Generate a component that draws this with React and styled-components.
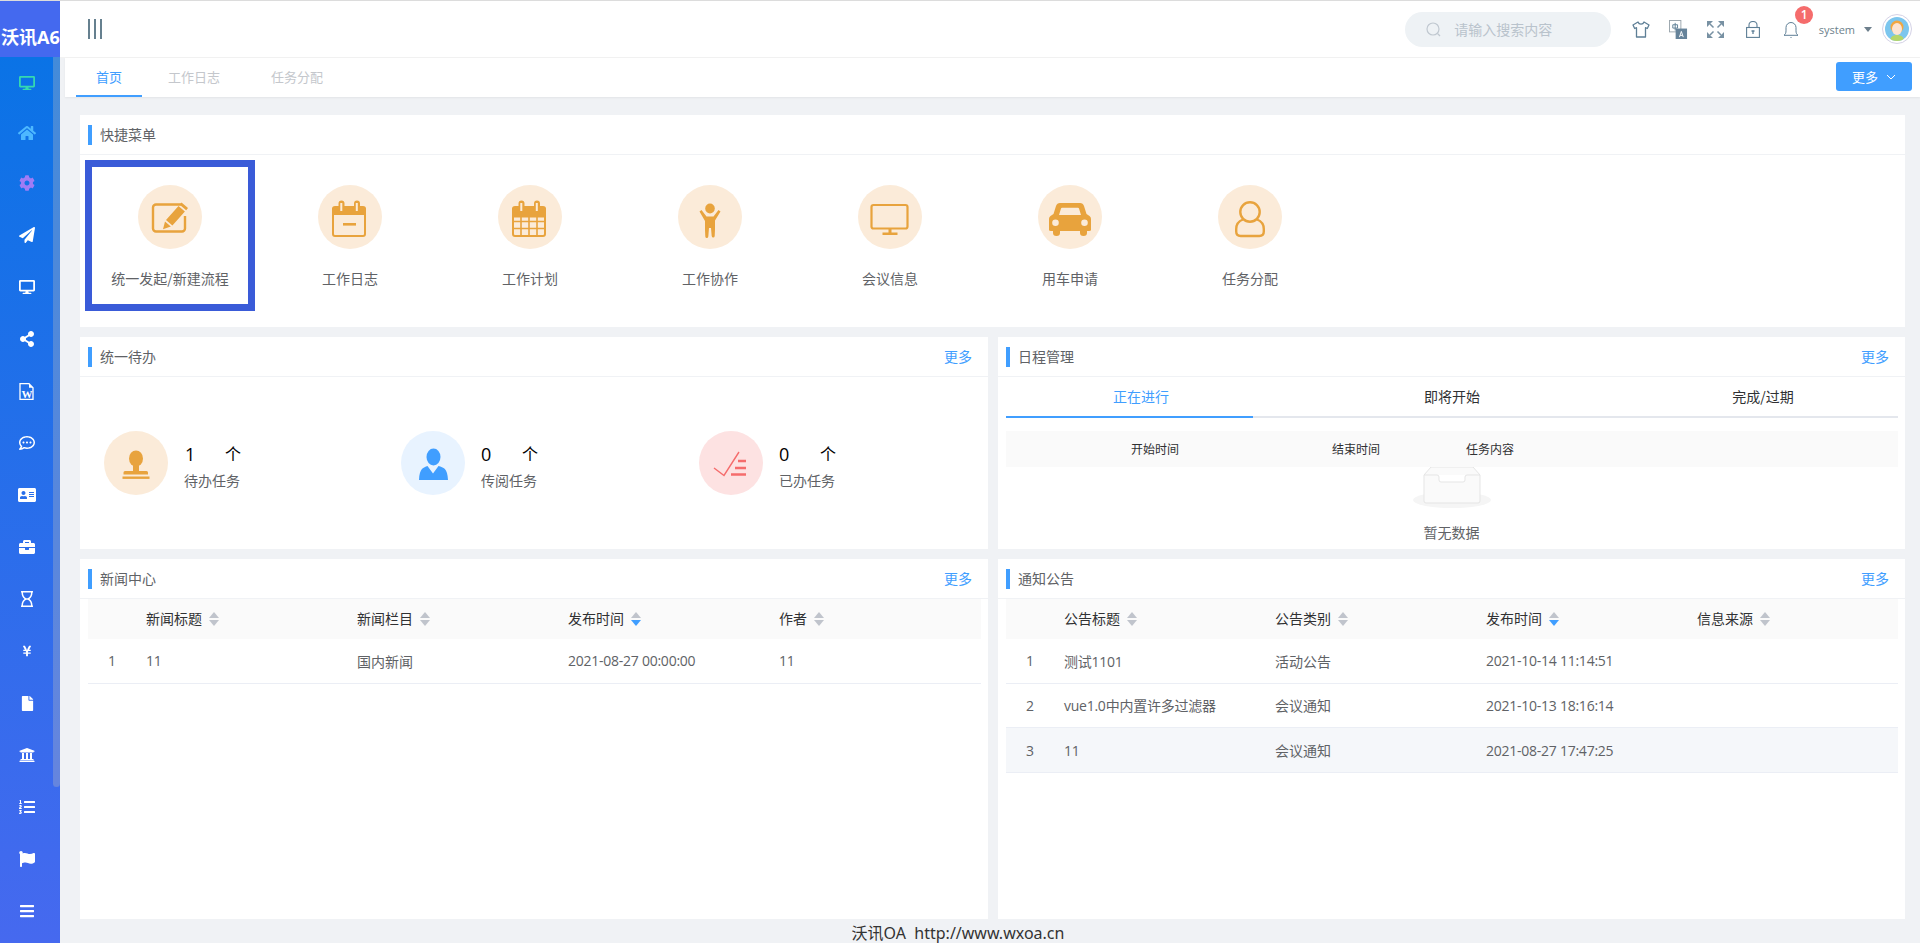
import React from 'react'
import styled, { createGlobalStyle } from 'styled-components'
import {
  FaDesktop, FaHome, FaCog, FaPaperPlane, FaShareAlt, FaRegCommentDots,
  FaAddressCard, FaBriefcase, FaRegHourglass, FaYenSign, FaFile, FaUniversity, FaListOl, FaFlag, FaBars,
} from 'react-icons/fa'

const GlobalStyle = createGlobalStyle`
  html, body { margin: 0; padding: 0; height: 100%; overflow: hidden; background: #f0f2f5; }
  * { box-sizing: border-box; }
  body { font-family: "Open Sans", "Noto Sans CJK SC", sans-serif; font-size: 14px; color: #606266; }
`

const Page = styled.div`
  display: grid;
  grid-template-columns: 60px 1fr;
  width: 1920px;
  height: 943px;
  border-top: 1px solid #dcdcdc;
`

/* sidebar */
const Sidebar = styled.aside`
  display: flex;
  flex-direction: column;
  height: 942px;
  overflow: hidden;
`
const Logo = styled.div`
  flex: 0 0 56px;
  padding: 22px 0 0 1px;
  background: #4469ef;
  color: #fff;
  font-size: 18px;
  font-weight: 700;
  line-height: 28px;
  white-space: nowrap;
  overflow: hidden;
`
const Nav = styled.nav`
  position: relative;
  flex: 1;
  background: linear-gradient(180deg, #0a73e6 0%, #4669ef 100%);
`
const Thumb = styled.div`
  position: absolute;
  top: 0;
  right: 0;
  width: 7px;
  height: 730px;
  border-radius: 0 0 4px 4px;
  background: rgba(190, 190, 190, 0.32);
`
const NavItem = styled.div`
  display: flex;
  align-items: center;
  justify-content: center;
  width: 54px;
  height: 52px;
  margin-top: ${(p) => (p.$tight ? -2 : 0)}px;
  color: ${(p) => p.$color || '#fff'};
  font-size: ${(p) => p.$size || 16}px;
`

/* top bar */
const Main = styled.div`
  display: flex;
  flex-direction: column;
  min-width: 0;
  height: 942px;
`
const TopBar = styled.header`
  display: flex;
  align-items: center;
  flex: 0 0 57px;
  padding: 0 8px 0 28px;
  background: #fff;
  border-bottom: 1px solid #f2f2f2;
`
const Hamburger = styled.div`
  display: flex;
  gap: 4px;
  height: 20px;
  i {
    display: block;
    width: 2px;
    background: #66808f;
  }
`
const Search = styled.div`
  display: flex;
  align-items: center;
  width: 206px;
  height: 35px;
  margin-left: auto;
  padding-left: 21px;
  border-radius: 18px;
  background: #eef2f5;
  color: #b9c3cc;
  font-family: "Noto Sans CJK SC", sans-serif;
  svg { margin-right: 13px; }
`
const TopIcon = styled.div`
  position: relative;
  display: flex;
  align-items: center;
  justify-content: center;
  width: 37.5px;
  height: 30px;
  svg { display: block; }
`
const IconRow = styled.div`
  display: flex;
  margin-left: 11px;
`
const Badge = styled.span`
  position: absolute;
  top: -8px;
  left: 23px;
  width: 18px;
  height: 18px;
  border-radius: 50%;
  background: #f56c6c;
  color: #fff;
  font-size: 12px;
  font-weight: 600;
  line-height: 18px;
  text-align: center;
`
const UserName = styled.div`
  display: flex;
  align-items: center;
  margin-left: 9px;
  color: #6d7f8c;
  font-size: 11px;
  &::after {
    content: '';
    margin: 1px 0 0 9px;
    border-top: 5px solid #6d7f8c;
    border-left: 4.5px solid transparent;
    border-right: 4.5px solid transparent;
  }
`
const Avatar = styled.div`
  width: 30px;
  height: 30px;
  margin-left: 10px;
  padding: 2px;
  border: 1px solid #d4d2e6;
  border-radius: 50%;
  svg { display: block; border-radius: 50%; }
`

/* tab strip */
const TabStrip = styled.div`
  display: flex;
  align-items: center;
  flex: 0 0 39px;
  margin-left: 5px;
  padding: 0 8px 0 11px;
  background: #fff;
  box-shadow: 0 1px 2px rgba(0, 0, 0, 0.06);
`
const PageTab = styled.div`
  width: ${(p) => p.$width}px;
  height: 39px;
  border-bottom: 2px solid ${(p) => (p.$active ? '#409eff' : 'transparent')};
  color: ${(p) => (p.$active ? '#409eff' : '#c4c7cc')};
  font-family: "Noto Sans CJK SC", sans-serif;
  font-size: 13px;
  line-height: 38px;
  text-align: ${(p) => (p.$active ? 'center' : 'left')};
  padding-left: ${(p) => p.$pad || 0}px;
`
const MoreButton = styled.div`
  display: flex;
  align-items: center;
  gap: 8px;
  width: 76px;
  height: 29px;
  margin: 0 0 2px auto;
  padding-left: 16px;
  border-radius: 3px;
  background: #409eff;
  color: #fff;
  font-family: "Noto Sans CJK SC", sans-serif;
  font-size: 13px;
`

/* content */
const Content = styled.main`
  display: grid;
  grid-template-columns: 908px 907px;
  grid-template-rows: 212px 212px 360px;
  gap: 10px;
  padding: 18px 15px 0 20px;
`
const Card = styled.section`
  grid-column: ${(p) => (p.$wide ? '1 / -1' : 'auto')};
  background: #fff;
  min-width: 0;
`
const CardHead = styled.div`
  display: flex;
  align-items: center;
  height: 40px;
  padding: 0 16px 0 8px;
  border-bottom: 1px solid #f0f2f5;
`
const CardTitle = styled.h3`
  margin: 0;
  padding: 0 0 2px 8px;
  border-left: 4px solid #409eff;
  color: #606266;
  font-family: "Noto Sans CJK SC", sans-serif;
  font-size: 14px;
  font-weight: 400;
  line-height: 18px;
`
const MoreLink = styled.a`
  margin: -2px 0 0 auto;
  color: #409eff;
  font-family: "Noto Sans CJK SC", sans-serif;
  font-size: 14px;
`

const QuickRow = styled.div`
  display: flex;
  padding: 5px 0 0 5px;
`
const QuickItem = styled.div`
  display: flex;
  flex-direction: column;
  align-items: center;
  width: ${(p) => (p.$boxed ? 170 : 180)}px;
  height: 151px;
  margin-right: ${(p) => (p.$boxed ? 5 : 0)}px;
  padding-top: ${(p) => (p.$boxed ? 18 : 25)}px;
  border: ${(p) => (p.$boxed ? '7px solid #3a5bd8' : 'none')};
`
const Round = styled.div`
  flex: 0 0 64px;
  width: 64px;
  height: 64px;
  border-radius: 50%;
  background: ${(p) => p.$bg || '#fbebd9'};
  svg { display: block; }
`
const QuickLabel = styled.div`
  margin-top: 19px;
  color: #606266;
  font-family: "Noto Sans CJK SC", sans-serif;
  font-size: 14px;
  line-height: 20px;
  white-space: nowrap;
`

const StatRow = styled.div`
  display: grid;
  grid-template-columns: 297px 298px 297px;
  padding: 54px 0 0 24px;
`
const Stat = styled.div`
  display: flex;
  align-items: center;
  gap: 16px;
`
const StatText = styled.div`
  padding-top: 6px;
`
const StatCount = styled.div`
  display: flex;
  align-items: center;
  height: 24px;
  margin-bottom: 4px;
  color: #000;
  font-size: 18px;
  b { width: 41px; font-weight: 400; padding-left: ${(p) => p.$pad || 0}px; }
  span { margin-top: -3px; font-family: "Noto Sans CJK SC", sans-serif; font-size: 16px; }
`
const StatLabel = styled.div`
  font-family: "Noto Sans CJK SC", sans-serif;
  font-size: 14px;
  line-height: 20px;
  color: #606266;
`

const ScheduleTabs = styled.div`
  display: grid;
  grid-template-columns: 247px 1fr 247px;
  height: 41px;
  margin: 0 7px 0 8px;
  border-bottom: 2px solid #e4e7ed;
`
const ScheduleTab = styled.div`
  height: 41px;
  padding: ${(p) => p.$pad || '0'};
  border-bottom: 2px solid ${(p) => (p.$active ? '#409eff' : 'transparent')};
  color: ${(p) => (p.$active ? '#409eff' : '#303133')};
  font-family: "Noto Sans CJK SC", sans-serif;
  font-size: 14px;
  line-height: 38px;
  text-align: center;
`
const ScheduleHead = styled.div`
  display: grid;
  grid-template-columns: 201px 134px 1fr;
  height: 36px;
  margin: 13px 7px 0 8px;
  padding-left: 125px;
  background: #fafafa;
  color: #303133;
  font-family: "Noto Sans CJK SC", sans-serif;
  font-size: 12px;
  line-height: 35px;
`
const Empty = styled.div`
  display: flex;
  flex-direction: column;
  align-items: center;
  font-family: "Noto Sans CJK SC", sans-serif;
  font-size: 14px;
  line-height: 20px;
  color: #606266;
  svg { display: block; margin-bottom: 14px; }
`

const Table = styled.div`
  margin: 0 7px 0 8px;
`
const Row = styled.div`
  display: grid;
  grid-template-columns: 58px 211px 211px 211px 1fr;
  align-items: center;
  height: ${(p) => (p.$head ? 40 : 44.67)}px;
  padding-bottom: ${(p) => (p.$head ? 2 : 0)}px;
  background: ${(p) => (p.$head ? '#fafafa' : p.$hover ? '#f5f7fa' : '#fff')};
  border-bottom: ${(p) => (p.$head ? 'none' : '1px solid #ebeef5')};
  color: ${(p) => (p.$head ? '#303133' : '#606266')};
  font-family: "Noto Sans CJK SC", sans-serif;
  font-size: 14px;
  span:first-child { padding-left: 20px; }
`
const Num = styled.span`
  font-family: "Open Sans", "Noto Sans CJK SC", sans-serif;
  letter-spacing: -0.25px;
`
const HeadCell = styled.span`
  display: flex;
  align-items: center;
`
const Sort = styled.i`
  display: flex;
  flex-direction: column;
  gap: 2px;
  margin: 2px 0 0 7px;
  &::before, &::after {
    content: '';
    width: 0;
    border-left: 5px solid transparent;
    border-right: 5px solid transparent;
  }
  &::before { border-bottom: 6px solid #c0c4cc; }
  &::after { border-top: 6px solid ${(p) => (p.$down ? '#409eff' : '#c0c4cc')}; }
`

const Footer = styled.footer`
  flex: 1;
  padding: 3px 64px 0 0;
  color: #333;
  font-family: "Noto Sans", "Noto Sans CJK SC", sans-serif;
  font-size: 16px;
  line-height: 22px;
  text-align: center;
  white-space: pre;
`

const Orange = '#e8a33d'

const IconEdit = () => (
  <svg width="64" height="64" viewBox="0 0 64 64" fill="none">
    <path d="M43 19.5H18a3 3 0 0 0-3 3v21a3 3 0 0 0 3 3h26a3 3 0 0 0 3-3V31" stroke={Orange} strokeWidth="2.4" />
    <path fill={Orange} d="M43.5 17.5l6.5 5.5-1.8 2.2-6.5-5.5zM40.5 21l6.4 5.6-12.5 13.9-6.4-5.6zM27 36.500l5.800 5-7.800 2.800z" />
  </svg>
)
const CalendarBase = ({ children }) => (
  <svg width="64" height="64" viewBox="0 0 64 64" fill="none">
    <path fill={Orange} d="M14 24a3 3 0 0 1 3-3h3.500v-2.500a3 3 0 0 1 6 0V21h9.500v-2.500a3 3 0 0 1 6 0V21H45a3 3 0 0 1 3 3v6H14z" />
    <rect x="15" y="23" width="32" height="28" rx="2" stroke={Orange} strokeWidth="2" />
    <rect x="22.300" y="18" width="2" height="8" fill="#fbebd9" />
    <rect x="37.800" y="18" width="2" height="8" fill="#fbebd9" />
    {children}
  </svg>
)
const IconLog = () => (
  <CalendarBase>
    <rect x="25" y="38" width="13" height="2.600" fill={Orange} />
  </CalendarBase>
)
const IconPlan = () => (
  <CalendarBase>
    <path stroke={Orange} strokeWidth="5" d="M15 30h32" />
    <path stroke={Orange} strokeWidth="1.600" d="M23 30v20M31 30v20M39 30v20M15 36.500h32M15 43.500h32" />
  </CalendarBase>
)
const IconPerson = () => (
  <svg width="64" height="64" viewBox="0 0 64 64" fill={Orange}>
    <ellipse cx="32" cy="23.500" rx="4.800" ry="5" />
    <path d="M21.500 26.500l2-1.500 5 6.500h7l5-6.500 2 1.500-5.500 9v9l-.3 6.500q-.2 1.500-1.500 1.500t-1.500-1.500L33 43h-2l-.7 8.500q-.2 1.500-1.500 1.500t-1.500-1.500l-.3-6.500v-9z" />
  </svg>
)
const IconScreen = () => (
  <svg width="64" height="64" viewBox="0 0 64 64" fill="none">
    <rect x="13.500" y="20" width="36" height="23.500" rx="2" stroke={Orange} strokeWidth="2.200" />
    <path fill={Orange} d="M30.500 44h3v3.500h6v2.400H24.500v-2.400h6z" />
  </svg>
)
const IconCar = () => (
  <svg width="64" height="64" viewBox="0 0 64 64">
    <path fill={Orange} fillRule="evenodd" d="M22 18h20q3 0 4 3l2.500 8 3 2q1.500 1 1.500 3v11q0 1-2 1h-2v2q0 3-3.500 3t-3.500-3v-2H22v2q0 3-3.500 3T15 48v-2h-2q-2 0-2-1V34q0-2 1.500-3l3-2L18 21q1-3 4-3zm1 5.500L21 30h22l-2-6.500q-.3-.8-1-.8H24q-.7 0-1 .8zM17.500 34.500a3.300 3.300 0 1 0 0 6.600 3.300 3.300 0 0 0 0-6.600zm29 0a3.300 3.300 0 1 0 0 6.600 3.300 3.300 0 0 0 0-6.600z" />
  </svg>
)
const IconUser = () => (
  <svg width="64" height="64" viewBox="0 0 64 64" fill="none" stroke={Orange} strokeWidth="2.400">
    <circle cx="32" cy="27" r="9.700" />
    <path d="M25 34.500c-4 1.500-6.800 5-6.800 9.500v2.500q0 4.500 4.500 4.500h18.600q4.500 0 4.500-4.500V44c0-4.500-2.800-8-6.800-9.500" />
  </svg>
)
const IconStamp = () => (
  <svg width="64" height="64" viewBox="0 0 64 64" fill={Orange}>
    <ellipse cx="32" cy="27.500" rx="7" ry="8" />
    <path d="M29 33h6v7h7.500q1.500 0 1.500 1.500v2H19.500v-2q0-1.500 1.500-1.500h8z" />
    <rect x="18.500" y="45.500" width="27" height="2.400" />
  </svg>
)
const IconMan = () => (
  <svg width="64" height="64" viewBox="0 0 64 64" fill="#409eff">
    <ellipse cx="32.500" cy="26" rx="7" ry="8.500" />
    <path d="M26.500 35l5.500 7.500L37.500 35c5 1.500 9 2 9.500 14H18c.5-12 4.500-12.500 8.500-14z" />
  </svg>
)
const IconCheckList = () => (
  <svg width="64" height="64" viewBox="0 0 64 64" fill="none" stroke="#f56c6c">
    <path strokeWidth="1.400" d="M15 37l10 7.500L40 21" />
    <path strokeWidth="2.400" d="M39 30h8M36 37h11M32 43.500h15" />
  </svg>
)

const TOP = '#5e7f96'
const IconShirt = () => (
  <svg width="18" height="17" viewBox="0 0 18 17" fill="none" stroke={TOP} strokeWidth="1.300" strokeLinejoin="round">
    <path d="M6 1L1 4l1.700 3.500 1.800-.8V16h9V6.700l1.800.8L17 4l-5-3c-.5 1.500-1.500 2.200-3 2.200S6.500 2.500 6 1z" />
  </svg>
)
const IconTranslate = () => (
  <svg width="19" height="19" viewBox="0 0 20 20">
    <rect x="0.500" y="0.500" width="12" height="12" fill="#fff" stroke="#9aa5ad" />
    <path d="M4 5h5v3.500H4zM6.500 3v8" fill="none" stroke="#5e7f96" strokeWidth="1" />
    <rect x="7" y="9" width="12" height="11" fill="#66839a" />
    <path d="M11 18l2-6 2 6M11.700 16.200h2.600" fill="none" stroke="#fff" strokeWidth="1" />
  </svg>
)
const IconExpand = () => (
  <svg width="17" height="17" viewBox="0 0 17 17" fill="#7891a3" stroke="#7891a3">
    <path stroke="none" d="M0 0h6L0 6zM17 0v6l-6-6zM0 17v-6l6 6zM17 17h-6l6-6z" />
    <path strokeWidth="1.500" fill="none" d="M3 3l3.500 3.500M14 3l-3.500 3.500M3 14l3.500-3.500M14 14l-3.500-3.500" />
  </svg>
)
const IconLock = () => (
  <svg width="14" height="17" viewBox="0 0 14 17" fill="none" stroke={TOP} strokeWidth="1.100">
    <rect x="0.600" y="6.500" width="12.800" height="9.900" />
    <path d="M3 6.500V4a4 3.500 0 0 1 8 0v2.500" />
    <path d="M5.500 10h3M7 10v3" strokeWidth="1.300" />
  </svg>
)
const IconBell = () => (
  <svg width="16" height="17" viewBox="0 0 16 17" fill="none" stroke={TOP} strokeWidth="1">
    <path d="M1 14.300h14c-1.500-1-2-2.500-2-4.500V6.500a5 5 0 0 0-10 0v3.300c0 2-.5 3.500-2 4.500z" />
    <path d="M8 16v1" />
  </svg>
)
const IconSearch = () => (
  <svg width="15" height="15" viewBox="0 0 15 15" fill="none" stroke="#c0c8d0" strokeWidth="1.200">
    <circle cx="7" cy="7" r="6" />
    <path d="M11.500 11.500L14 14" />
  </svg>
)
const IconWord = () => (
  <svg width="16" height="17" viewBox="0 0 16 17">
    <path d="M1 .7h9l4 4v11.600H1z" fill="none" stroke="#fff" strokeWidth="1.300" />
    <path d="M10 .7v4h4z" fill="#fff" />
    <text x="2.500" y="14.500" fill="#fff" fontFamily="Liberation Serif, serif" fontSize="11" fontWeight="700">W</text>
  </svg>
)
const AvatarArt = () => (
  <svg width="24" height="24" viewBox="0 0 24 24">
    <rect width="24" height="24" fill="#7cc6ee" />
    <path d="M5 24c0-4 3-6 7-6s7 2 7 6z" fill="#b6d66a" />
    <circle cx="12" cy="10" r="6.500" fill="#f2a640" />
    <ellipse cx="12" cy="12" rx="5" ry="6" fill="#fde4d2" />
  </svg>
)
const EmptyBox = () => (
  <svg width="78" height="41" viewBox="0 0 78 41">
    <ellipse cx="39" cy="33" rx="39" ry="8" fill="#f5f5f5" />
    <path d="M18 0L11 8v26q0 2 2 2h52q2 0 2-2V8l-7-8z" fill="#fafafa" stroke="#e5e5e5" />
    <path d="M11 8h13q2 0 2 2v3q0 2 2 2h22q2 0 2-2v-3q0-2 2-2h13" fill="#fff" stroke="#e5e5e5" />
  </svg>
)

const navIcons = [
  [FaDesktop, '#34d9b0'], [FaHome, '#4db8ff', 18], [FaCog, '#a07cf5'], [FaPaperPlane], [FaDesktop],
  [FaShareAlt], [IconWord], [FaRegCommentDots], [FaAddressCard, undefined, 18], [FaBriefcase],
  [FaRegHourglass, undefined, 16], [FaYenSign, undefined, 12], [FaFile, undefined, 15], [FaUniversity], [FaListOl], [FaFlag], [FaBars],
]

const quickMenus = [
  ['统一发起/新建流程', IconEdit], ['工作日志', IconLog], ['工作计划', IconPlan], ['工作协作', IconPerson],
  ['会议信息', IconScreen], ['用车申请', IconCar], ['任务分配', IconUser],
]

const noticeRows = [
  ['1', '测试1101', '活动公告', '2021-10-14 11:14:51'],
  ['2', 'vue1.0中内置许多过滤器', '会议通知', '2021-10-13 18:16:14'],
  ['3', '11', '会议通知', '2021-08-27 17:47:25'],
]

const Head = ({ title }) => (
  <CardHead>
    <CardTitle>{title}</CardTitle>
    <MoreLink>更多</MoreLink>
  </CardHead>
)

const TableHead = ({ cols }) => (
  <Row $head>
    <span />
    {cols.map((c) => (
      <HeadCell key={c}>{c}<Sort $down={c === '发布时间'} /></HeadCell>
    ))}
  </Row>
)

export default function App() {
  return (
    <>
      <GlobalStyle />
      <Page>
        <Sidebar>
          <Logo>沃讯A6</Logo>
          <Nav>
            <Thumb />
            {navIcons.map(([Icon, color, size], i) => (
              <NavItem key={i} $color={color} $size={size} $tight={i === 1 || i === 2}><Icon /></NavItem>
            ))}
          </Nav>
        </Sidebar>
        <Main>
          <TopBar>
            <Hamburger><i /><i /><i /></Hamburger>
            <Search><IconSearch />请输入搜索内容</Search>
            <IconRow>
              <TopIcon><IconShirt /></TopIcon>
              <TopIcon><IconTranslate /></TopIcon>
              <TopIcon><IconExpand /></TopIcon>
              <TopIcon><IconLock /></TopIcon>
              <TopIcon><IconBell /><Badge>1</Badge></TopIcon>
            </IconRow>
            <UserName>system</UserName>
            <Avatar><AvatarArt /></Avatar>
          </TopBar>
          <TabStrip>
            <PageTab $active $width={66}>首页</PageTab>
            <PageTab $width={129} $pad={26}>工作日志</PageTab>
            <PageTab $width={100}>任务分配</PageTab>
            <MoreButton>
              更多
              <svg width="10" height="6" viewBox="0 0 10 6" fill="none" stroke="#fff"><path d="M1 1l4 4 4-4" /></svg>
            </MoreButton>
          </TabStrip>
          <Content>
            <Card $wide>
              <CardHead><CardTitle>快捷菜单</CardTitle></CardHead>
              <QuickRow>
                {quickMenus.map(([label, Icon], i) => (
                  <QuickItem key={label} $boxed={i === 0}>
                    <Round><Icon /></Round>
                    <QuickLabel>{label}</QuickLabel>
                  </QuickItem>
                ))}
              </QuickRow>
            </Card>
            <Card>
              <Head title="统一待办" />
              <StatRow>
                <Stat>
                  <Round><IconStamp /></Round>
                  <StatText>
                    <StatCount $pad={1}><b>1</b><span>个</span></StatCount>
                    <StatLabel>待办任务</StatLabel>
                  </StatText>
                </Stat>
                <Stat>
                  <Round $bg="#e8f3ff"><IconMan /></Round>
                  <StatText>
                    <StatCount><b>0</b><span>个</span></StatCount>
                    <StatLabel>传阅任务</StatLabel>
                  </StatText>
                </Stat>
                <Stat>
                  <Round $bg="#fde2e2"><IconCheckList /></Round>
                  <StatText>
                    <StatCount><b>0</b><span>个</span></StatCount>
                    <StatLabel>已办任务</StatLabel>
                  </StatText>
                </Stat>
              </StatRow>
            </Card>
            <Card>
              <Head title="日程管理" />
              <ScheduleTabs>
                <ScheduleTab $active $pad="0 0 0 23px">正在进行</ScheduleTab>
                <ScheduleTab>即将开始</ScheduleTab>
                <ScheduleTab $pad="0 23px 0 0">完成/过期</ScheduleTab>
              </ScheduleTabs>
              <ScheduleHead>
                <span>开始时间</span>
                <span>结束时间</span>
                <span>任务内容</span>
              </ScheduleHead>
              <Empty>
                <EmptyBox />
                暂无数据
              </Empty>
            </Card>
            <Card>
              <Head title="新闻中心" />
              <Table>
                <TableHead cols={['新闻标题', '新闻栏目', '发布时间', '作者']} />
                <Row>
                  <Num>1</Num>
                  <Num>11</Num>
                  <span>国内新闻</span>
                  <Num>2021-08-27 00:00:00</Num>
                  <Num>11</Num>
                </Row>
              </Table>
            </Card>
            <Card>
              <Head title="通知公告" />
              <Table>
                <TableHead cols={['公告标题', '公告类别', '发布时间', '信息来源']} />
                {noticeRows.map((r, i) => (
                  <Row key={r[0]} $hover={i === 2}>
                    <Num>{r[0]}</Num>
                    <Num>{r[1]}</Num>
                    <span>{r[2]}</span>
                    <Num>{r[3]}</Num>
                    <span />
                  </Row>
                ))}
              </Table>
            </Card>
          </Content>
          <Footer>沃讯OA  http://www.wxoa.cn</Footer>
        </Main>
      </Page>
    </>
  )
}
